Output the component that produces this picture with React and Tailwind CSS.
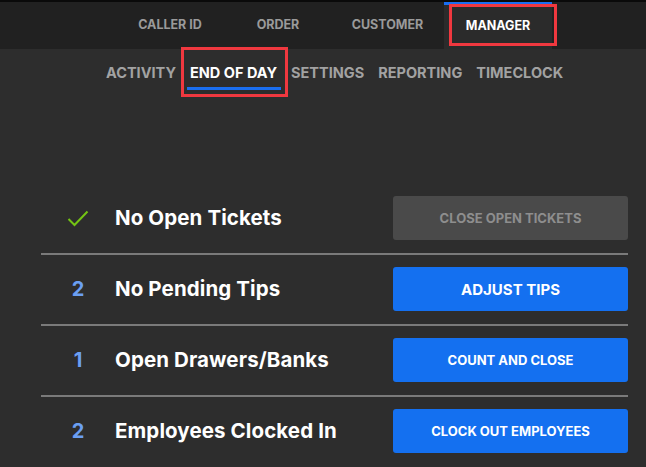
import React from "react";

const font = { fontFamily: "Inter, Lato, sans-serif" };

function Check() {
  return (
    <svg width="22" height="17" viewBox="0 0 22 17" className="block">
      <path d="M1.5 9 L7.5 15 L20.5 1.5" fill="none" stroke="#74c414" strokeWidth="2" />
    </svg>
  );
}

function Row({ mark, label, button, disabled, big, last }) {
  return (
    <div className={last ? "" : "border-b-2 border-[#7a7a7a]"}>
      <div className="flex items-center pt-[12px] pb-[13px]">
        <div className="w-[74px] flex justify-center">
          {mark === "check" ? (
            <Check />
          ) : (
            <span className="text-[20px] font-bold text-[#6b9ff2] leading-none">{mark}</span>
          )}
        </div>
        <div className="flex-1 text-[20.5px] font-bold text-white leading-none tracking-[0.1px]">{label}</div>
        <button
          className={
            "w-[235px] h-[44px] rounded-[3px] font-bold leading-none " +
            (disabled
              ? "bg-[#4a4a4a] text-[#8e8e8e] text-[13px]"
              : "bg-[#1470f0] text-white " + (big ? "text-[15px]" : "text-[13px]"))
          }
        >
          {button}
        </button>
      </div>
    </div>
  );
}

export default function App() {
  return (
    <div className="w-[646px] h-[467px] bg-[#2d2d2d] overflow-hidden" style={font}>
      <div className="h-[49px] bg-[#212121] border-t-2 border-[#0a0a0a] flex">
        <div className="w-[115px]" />
        <div className="w-[110px] flex items-center justify-center text-[12.5px] font-bold text-[#9a9a9a]">CALLER ID</div>
        <div className="w-[106px] flex items-center justify-center text-[12.5px] font-bold text-[#9a9a9a]">ORDER</div>
        <div className="w-[113px] flex items-center justify-center text-[12.5px] font-bold text-[#9a9a9a]">CUSTOMER</div>
        <div className="w-[108px] bg-[#2b2b2b] border-t-[3px] border-[#1a6ef0] relative flex items-center justify-center text-[12.5px] font-bold text-white">
          <span className="relative top-[-1px]">MANAGER</span>
          <div className="absolute left-[5px] top-[-1px] w-[108px] h-[42px] border-[3px] border-[#f0383f]" />
        </div>
      </div>
      <div className="flex pl-[106px] gap-[14px] h-[48px] items-center text-[14.5px] font-bold text-[#a2a2a2] leading-[22px]">
        <span>ACTIVITY</span>
        <span className="relative text-white">
          END OF DAY
          <div className="absolute left-[-3px] right-[-4px] top-[25px] h-[3px] bg-[#1a6ef0]" />
          <div className="absolute left-[-9px] right-[-11px] top-[-15px] h-[50px] border-[3px] border-[#f0383f]" />
        </span>
        <span>SETTINGS</span>
        <span>REPORTING</span>
        <span>TIMECLOCK</span>
      </div>
      <div className="pt-[87px] pl-[41px] w-[628px]">
        <Row mark="check" label="No Open Tickets" button="CLOSE OPEN TICKETS" disabled />
        <Row mark="2" label="No Pending Tips" button="ADJUST TIPS" big />
        <Row mark="1" label="Open Drawers/Banks" button="COUNT AND CLOSE" />
        <Row mark="2" label="Employees Clocked In" button="CLOCK OUT EMPLOYEES" last />
      </div>
    </div>
  );
}
